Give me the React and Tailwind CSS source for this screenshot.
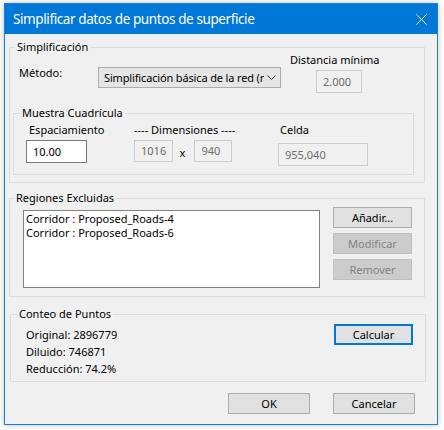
import React from 'react';

const font = { fontFamily: '"Noto Sans", "Open Sans", sans-serif' };

const Group = ({ label, labelLeft, className, children }) => (
    <div className={`relative border border-[#dcdcdc] ${className}`}>
        <span className={`absolute top-[-8px] ${labelLeft} bg-[#f0f0f0] px-[2px] leading-[14px] text-black`}>{label}</span>
        {children}
    </div>
);

const Btn = ({ children, disabled, focused, className = '' }) => (
    <div
        className={`flex items-center justify-center leading-[14px] ${
            disabled
                ? 'bg-[#cccccc] border border-[#bfbfbf] text-[#838383]'
                : focused
                ? 'bg-[#e1e1e1] border-2 border-[#0078d7] text-black'
                : 'bg-[#e1e1e1] border border-[#adadad] text-black'
        } ${className}`}
    >
        {children}
    </div>
);

const ReadOnly = ({ value, className }) => (
    <div className={`border border-[#cccccc] bg-[#f0f0f0] text-[#6d6d6d] flex items-center pl-[6px] leading-[14px] ${className}`}>{value}</div>
);

export default function App() {
    return (
        <div className="w-[444px] h-[430px] bg-white pt-[3px] pl-[4px] text-[11px] text-black" style={font}>
            <div className="w-[434px] h-[422px] border border-[#1a7fd4] bg-[#f0f0f0] flex flex-col shadow-[0_0_6px_rgba(0,0,0,0.25)]">
                {/* Barra de título */}
                <div className="h-[30px] bg-[#0078d7] flex items-center justify-between pl-[8px] pr-[10px]">
                    <span className="text-white text-[13.5px] tracking-[-0.4px] leading-[18px]">Simplificar datos de puntos de superficie</span>
                    <svg width="11" height="11" viewBox="0 0 11 11" className="mt-[1px]">
                        <path d="M0.5 0.5 L10.5 10.5 M10.5 0.5 L0.5 10.5" stroke="white" strokeWidth="1" />
                    </svg>
                </div>

                {/* Simplificación */}
                <Group label="Simplificación" labelLeft="left-[5px]" className="ml-[4px] mt-[13px] w-[416px] h-[136px]">
                    <div className="flex items-start h-[65px]">
                        <span className="ml-[9px] w-[79px] mt-[18px] leading-[14px]">Método:</span>
                        <div className="mt-[19px] w-[183px] h-[21px] bg-[#e5e5e5] border border-[#adadad] flex items-center pl-[5px] pr-[4px]">
                            <span className="flex-1 overflow-hidden whitespace-nowrap text-clip leading-[14px] tracking-[-0.15px]">Simplificación básica de la red (rápida)</span>
                            <svg width="9" height="5" viewBox="0 0 9 5" className="ml-[3px] shrink-0">
                                <path d="M0.5 0.5 L4.5 4.5 L8.5 0.5" stroke="#333" strokeWidth="1" fill="none" />
                            </svg>
                        </div>
                        <div className="ml-[9px] mt-[5px] flex flex-col">
                            <span className="leading-[14px] whitespace-nowrap">Distancia mínima</span>
                            <ReadOnly value="2.000" className="ml-[26px] mt-[3px] w-[46px] h-[23px]" />
                        </div>
                    </div>

                    <Group label="Muestra Cuadrícula" labelLeft="left-[6px]" className="ml-[3px] w-[401px] h-[62px]">
                        <div className="flex items-start">
                            <div className="ml-[12px] w-[61px] flex flex-col">
                                <span className="pl-[3px] mt-[9px] leading-[14px] whitespace-nowrap">Espaciamiento</span>
                                <div className="mt-[3px] w-[61px] h-[23px] bg-white border border-[#7a7a7a] flex items-center pl-[6px] leading-[14px]">10.00</div>
                            </div>
                            <div className="ml-[47px] w-[98px] flex flex-col">
                                <span className="mt-[9px] leading-[14px] whitespace-nowrap">---- Dimensiones ----</span>
                                <div className="mt-[3px] flex items-center">
                                    <ReadOnly value="1016" className="w-[39px] h-[22px]" />
                                    <span className="ml-[7px] w-[14px] mt-[3px] leading-[14px]">x</span>
                                    <ReadOnly value="940" className="ml-[1px] w-[38px] h-[22px]" />
                                </div>
                            </div>
                            <div className="ml-[46px] flex flex-col">
                                <span className="pl-[2px] mt-[9px] leading-[14px]">Celda</span>
                                <ReadOnly value="955,040" className="mt-[6px] w-[90px] h-[23px]" />
                            </div>
                        </div>
                    </Group>
                </Group>

                {/* Regiones Excluidas */}
                <Group label="Regiones Excluidas" labelLeft="left-[4px]" className="ml-[4px] mt-[15px] w-[416px] h-[99px]">
                    <div className="flex items-start">
                        <div className="ml-[13px] mt-[11px] w-[297px] h-[78px] bg-white border border-[#828282] pl-[2px] pt-[1px]">
                            <div className="leading-[14px]">Corridor : Proposed_Roads-4</div>
                            <div className="leading-[13px]">Corridor : Proposed_Roads-6</div>
                        </div>
                        <div className="ml-[13px] mt-[8px] flex flex-col gap-[5px]">
                            <Btn className="w-[79px] h-[21px]">Añadir...</Btn>
                            <Btn disabled className="w-[79px] h-[21px]">Modificar</Btn>
                            <Btn disabled className="w-[79px] h-[21px]">Remover</Btn>
                        </div>
                    </div>
                </Group>

                {/* Conteo de Puntos */}
                <Group label="Conteo de Puntos" labelLeft="left-[6px]" className="ml-[5px] mt-[17px] w-[416px] h-[68px]">
                    <div className="flex items-start justify-between">
                        <div className="ml-[15px] mt-[11px] flex flex-col">
                            <span className="leading-[17px]">Original: 2896779</span>
                            <span className="leading-[17px]">Diluido: 746871</span>
                            <span className="leading-[17px]">Reducción: 74.2%</span>
                        </div>
                        <Btn focused className="mr-[12px] mt-[9px] w-[79px] h-[21px]">Calcular</Btn>
                    </div>
                </Group>

                <div className="mt-[11px] flex justify-end gap-[23px] pr-[22px]">
                    <Btn className="w-[82px] h-[21px]">OK</Btn>
                    <Btn className="w-[82px] h-[21px]">Cancelar</Btn>
                </div>
            </div>
        </div>
    );
}
